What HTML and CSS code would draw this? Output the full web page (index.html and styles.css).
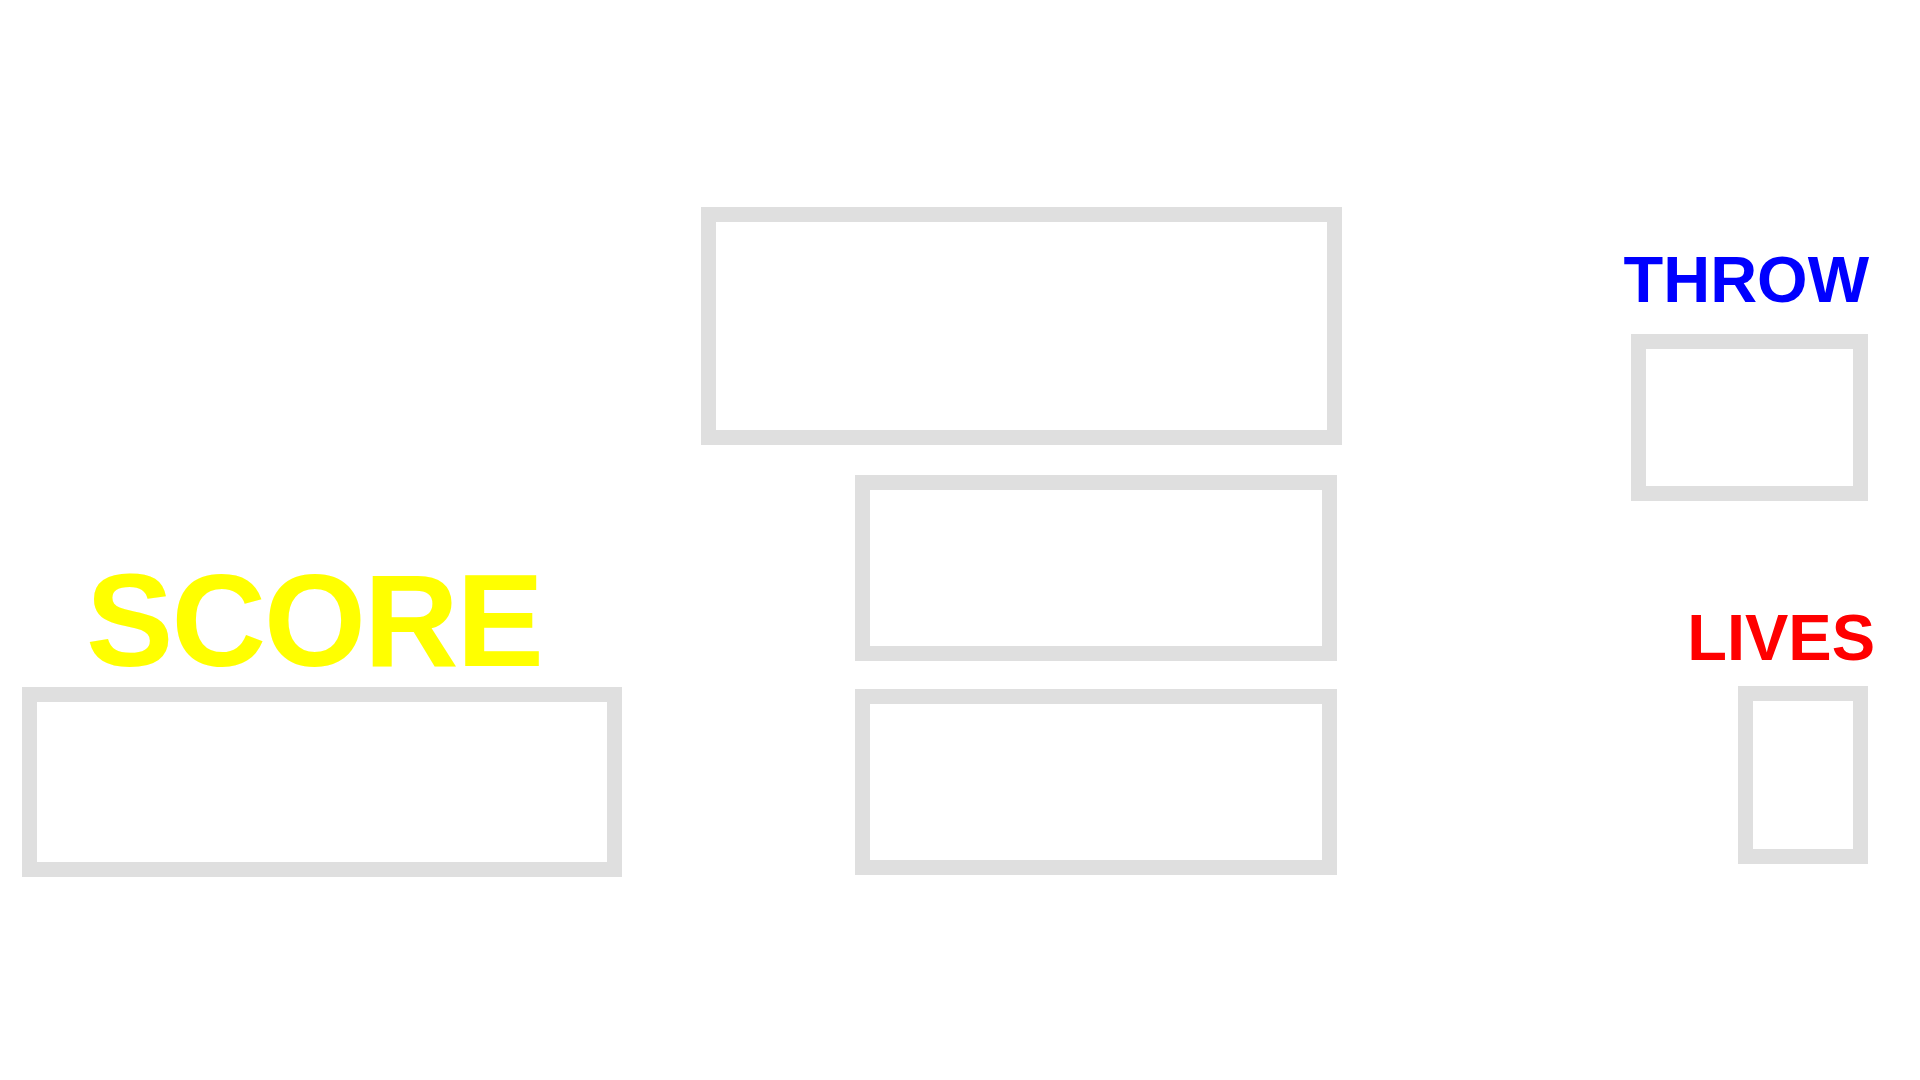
FILE: index.html
```html
<!DOCTYPE html>
<html lang="en">
<head>
    <meta charset="UTF-8">
    <meta name="viewport" content="width=device-width, initial-scale=1.0">
    <title>Game HUD</title>
    <link rel="stylesheet" href="styles.css">
</head>
<body>
    <div class="hud">
        <div class="col col-left">
            <div class="label score-label">SCORE</div>
            <div class="slot score-slot"></div>
        </div>

        <div class="col col-center">
            <div class="slot main-slot"></div>
            <div class="slot mid-slot"></div>
            <div class="slot low-slot"></div>
        </div>

        <div class="col col-right">
            <div class="label throw-label">THROW</div>
            <div class="slot throw-slot"></div>
            <div class="label lives-label">LIVES</div>
            <div class="slot lives-slot"></div>
        </div>
    </div>
</body>
</html>
```

FILE: styles.css
```css
/* General Styles */
body {
    margin: 0;
    padding: 0;
    background: #ffffff;
    font-family: 'Liberation Sans', Arial, sans-serif;
}

.hud {
    display: flex;
    width: 1920px;
    height: 1080px;
}

.col {
    display: flex;
    flex-direction: column;
    flex-shrink: 0;
}

/* Empty frames */
.slot {
    box-sizing: border-box;
    border: 15px solid #dfdfdf;
    background: #ffffff;
    flex-shrink: 0;
}

/* Labels */
.label {
    line-height: 1;
    font-weight: bold;
    white-space: nowrap;
}

/* Left column - score */
.col-left {
    margin-left: 22px;
    width: 600px;
    padding-top: 555px;
}

.score-label {
    font-size: 131px;
    color: #ffff00;
    margin-left: 64px;
    height: 132px;
    letter-spacing: -2px;
}

.score-slot {
    width: 600px;
    height: 190px;
}

/* Center column */
.col-center {
    margin-left: 79px;
    width: 641px;
    padding-top: 207px;
}

.main-slot {
    width: 641px;
    height: 238px;
}

.mid-slot,
.low-slot {
    align-self: flex-end;
    margin-right: 5px;
    width: 482px;
    height: 186px;
}

.mid-slot {
    margin-top: 30px;
}

.low-slot {
    margin-top: 28px;
}

/* Right column - throw & lives */
.col-right {
    margin-left: 283px;
    width: 250px;
    padding-top: 247px;
    align-items: flex-end;
}

.throw-label,
.lives-label {
    font-size: 65px;
}

.throw-label {
    color: #0000ff;
    margin-right: 6px;
}

.throw-slot {
    margin-top: 22px;
    margin-right: 7px;
    width: 237px;
    height: 167px;
}

.lives-label {
    color: #ff0000;
    margin-top: 104px;
}

.lives-slot {
    margin-top: 16px;
    margin-right: 7px;
    width: 130px;
    height: 178px;
}
```
